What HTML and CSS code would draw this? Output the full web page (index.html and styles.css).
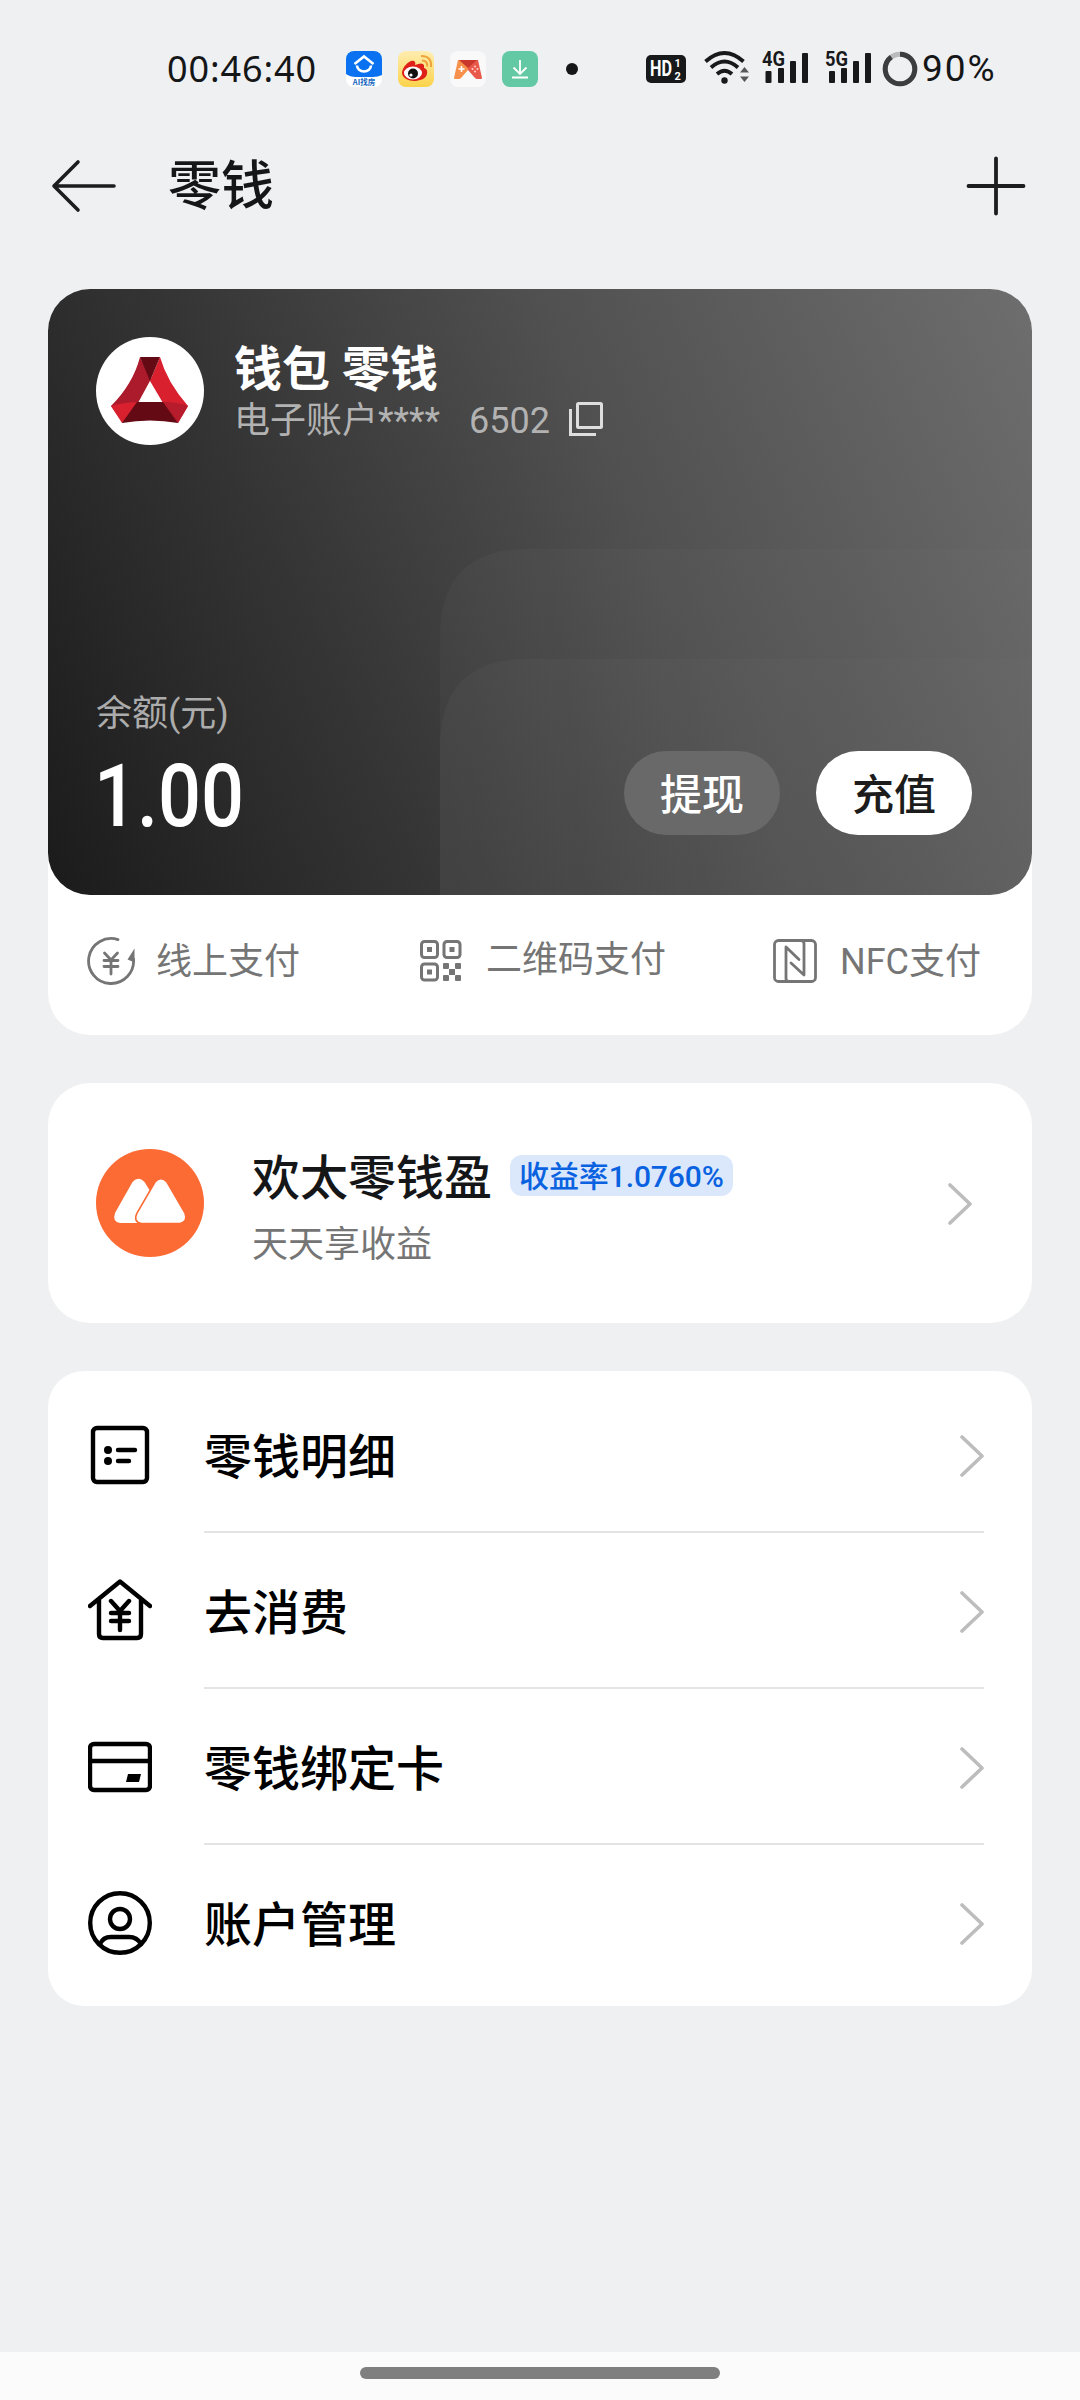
FILE: index.html
```html
<!DOCTYPE html>
<html lang="zh-CN">
<head>
<meta charset="utf-8">
<title>零钱</title>
<link rel="stylesheet" href="styles.css">
</head>
<body>
<div class="screen">
  <div class="status">
    <span class="clock">00:46:40</span>
    <div class="apps">
      <svg width="36" height="36" viewBox="0 0 36 36"><rect width="36" height="36" rx="8" fill="#fff"/><path d="M8 0h20a8 8 0 0 1 8 8v16q-4 2-9 2H10q-6 0-10-3V8a8 8 0 0 1 8-8z" fill="#0a72f0"/><path d="M8.500 13L18 5.500 27.500 13M11 14.500a7 6 0 0 0 14 0" fill="none" stroke="#fff" stroke-width="2.600"/><text x="18" y="34" text-anchor="middle" class="tiny">AI找房</text></svg>
      <svg width="36" height="36" viewBox="0 0 36 36"><defs><linearGradient id="y" x2="0" y2="1"><stop stop-color="#ffedb0"/><stop offset="1" stop-color="#fbd34a"/></linearGradient></defs><rect width="36" height="36" rx="8" fill="url(#y)"/><path d="M4 22C4 16 12 8 16 10q2 1 1 4 7-3 9 0l0 3q4 1 3 6c-1 5-8 7-13 7S4 27 4 22z" fill="#df2018"/><ellipse cx="15" cy="22" rx="9" ry="6.500" fill="#fff"/><circle cx="15" cy="22.500" r="5" fill="#111"/><circle cx="13" cy="24" r="1.600" fill="#fff"/><path d="M24 9.500q6 0 5 6M23 5q11 0 10 11" fill="none" stroke="#eda33a" stroke-width="2"/></svg>
      <svg width="36" height="36" viewBox="0 0 36 36"><rect width="36" height="36" rx="8" fill="#f9f9fa"/><path d="M8 9h10v10l-7 8q-1 1-2 1H5q-1 0-1-1z" fill="#f7904a"/><path d="M28 9H18v10l7 8q1 1 2 1h4q1 0 1-1z" fill="#e9594b"/><path d="M9 9h18l-9 8z" fill="#c9382b"/><path d="M8.500 18h6M11.500 15v6" stroke="#fff" stroke-width="1.600"/><g fill="#ffd0c5"><circle cx="25" cy="15.500" r="1"/><circle cx="22.500" cy="18" r="1"/><circle cx="27.500" cy="18" r="1"/><circle cx="25" cy="20.500" r="1"/></g></svg>
      <svg width="36" height="36" viewBox="0 0 36 36"><rect width="36" height="36" rx="8" fill="#63c9a4"/><path d="M18 9v14M11.500 16.500L18 23l6.500-6.500M10 26.500h16" fill="none" stroke="#fff" stroke-width="1.800"/></svg>
    </div>
    <span class="dot"></span>
    <svg class="signals" width="244" height="52" viewBox="0 -6 244 52">
      <g fill="#18191a">
        <rect y="6" width="40" height="28" rx="5"/>
        <text x="4" y="27" textLength="22" lengthAdjust="spacingAndGlyphs" class="hd">HD</text>
        <text x="28.500" y="18" class="hdn">1</text><text x="28.500" y="31" class="hdn">2</text>
        <circle cx="78.500" cy="31.500" r="3.200"/>
        <path d="M94 23.500l4.500-5.500 4.500 5.500zM94 27.500h9L98.500 33z" fill="#55575a"/>
      </g>
      <g fill="none" stroke="#18191a" stroke-width="3.800"><path d="M59.500 12.500q19-17 38 0M65 18.500q13.500-12 27 0M71 25q7.500-6.500 15 0"/></g>
      <g fill="#18191a">
        <rect x="119.500" y="22" width="6" height="12" rx="1"/><rect x="132" y="19" width="6" height="15" rx="1"/><rect x="144" y="12" width="6" height="22" rx="1"/><rect x="156" y="4" width="6" height="30" rx="1"/>
        <text x="116" y="17" textLength="23" lengthAdjust="spacingAndGlyphs" class="net">4G</text>
        <rect x="183" y="22" width="6" height="12" rx="1"/><rect x="195" y="19" width="6" height="15" rx="1"/><rect x="207" y="12" width="6" height="22" rx="1"/><rect x="219" y="4" width="6" height="30" rx="1"/>
        <text x="179" y="17" textLength="23" lengthAdjust="spacingAndGlyphs" class="net">5G</text>
      </g>
    </svg>
    <svg class="ring" width="36" height="36" viewBox="0 0 36 36"><circle cx="18" cy="18" r="14.800" fill="none" stroke="#b9bbbd" stroke-width="5"/><circle cx="18" cy="18" r="14.800" fill="none" stroke="#3c3d3f" stroke-width="5" pathLength="100" stroke-dasharray="90 10" transform="rotate(-90 18 18)"/></svg>
    <span class="battery">90%</span>
  </div>

  <header class="titlebar">
    <svg width="66" height="54" viewBox="0 0 66 54" fill="none" stroke="#1c1d1e" stroke-width="3.600" stroke-linecap="round" stroke-linejoin="round"><path d="M27 3L3 27l24 24M3 27h60"/></svg>
    <h1>零钱</h1>
    <svg width="60" height="60" viewBox="0 0 60 60" stroke="#1c1d1e" stroke-width="3.800" stroke-linecap="round"><path d="M2.500 30h55M30 2.500v55"/></svg>
  </header>

  <section class="wallet">
    <div class="bankcard">
      <svg class="cardart" viewBox="0 0 984 606" width="984" height="606"><defs><linearGradient id="s1" x2="1" y2="0"><stop stop-color="#fff" stop-opacity=".028"/><stop offset=".8" stop-color="#fff" stop-opacity=".012"/></linearGradient><linearGradient id="s2" x2="1" y2="0"><stop stop-color="#fff" stop-opacity=".03"/><stop offset=".8" stop-color="#fff" stop-opacity=".01"/></linearGradient></defs><path d="M392 606V348q0-88 88-88h504v346z" fill="url(#s1)"/><path d="M392 606V458q0-88 88-88h504v236z" fill="url(#s2)"/></svg>
      <div class="cardhead">
        <svg width="108" height="108" viewBox="0 0 108 108"><circle cx="54" cy="54" r="54" fill="#fff"/><path d="M44 20Q37 47 15 69l12 17q8-6 15-20l13-24-11-22z" fill="#ab1b2b"/><path d="M64 20Q71 45 92 69l-10 17q-10-6-15-20L54 44z" fill="#d9202f"/><path d="M44 20h20L54 44z" fill="#640a14"/><path d="M15 69q14-4 29-4L26 86z" fill="#d9202f"/><path d="M92 69q-10-4-25-4l15 21z" fill="#b61c2c"/><path d="M41 65h26l15 21q-28-5-56 0z" fill="#640a14"/></svg>
        <div class="names">
          <div class="bank">钱包 零钱</div>
          <div class="acct"><span>电子账户****</span><span class="tail">6502</span><svg width="34" height="34" viewBox="0 0 34 34" fill="none" stroke="#dedede" stroke-width="3"><rect x="8.500" y="1.500" width="24" height="24" rx="1"/><path d="M1.500 7v25.500H27"/></svg></div>
        </div>
      </div>
      <div class="cardfoot">
        <div class="balance"><div class="label">余额(元)</div><div class="amount">1.00</div></div>
        <button class="pill ghost">提现</button>
        <button class="pill solid">充值</button>
      </div>
    </div>
    <div class="methods">
      <div class="method">
        <svg width="48" height="48" viewBox="0 0 48 48" fill="none" stroke="#757575" stroke-width="2.800" stroke-linecap="round"><path d="M31 2.600A22.500 22.500 0 1 0 46.500 22"/><path d="M46.500 24v-9l-4.500 7z" fill="#757575" stroke-width="2"/><path d="M17.500 16l6.500 7 6.500-7M24 23v14M17 23.500h14M17 29.500h14"/></svg>
        <span>线上支付</span>
      </div>
      <div class="method qr">
        <svg width="42" height="42" viewBox="0 0 42 42"><g fill="none" stroke="#757575" stroke-width="3"><rect x="1.500" y="1.500" width="16" height="16" rx="3"/><rect x="24" y="1.500" width="16" height="16" rx="3"/><rect x="1.500" y="24" width="16" height="16" rx="3"/></g><g fill="#757575"><rect x="7" y="7" width="5" height="5"/><rect x="29.500" y="7" width="5" height="5"/><rect x="7" y="29.500" width="5" height="5"/><rect x="23" y="23" width="6" height="6" rx="1"/><rect x="35" y="23" width="6" height="6" rx="1"/><rect x="29" y="29" width="6" height="6"/><rect x="23" y="35" width="6" height="6" rx="1"/><rect x="35" y="35" width="6" height="6" rx="1"/></g></svg>
        <span>二维码支付</span>
      </div>
      <div class="method nfc">
        <svg width="44" height="44" viewBox="0 0 44 44" fill="none" stroke="#757575" stroke-width="2.800" stroke-linecap="round" stroke-linejoin="round"><rect x="1.500" y="1.500" width="41" height="41" rx="4"/><path d="M16 42.500q-3 0-3-3V8l13 12.500M28 1.500q3 0 3 3V36L18 24"/></svg>
        <span>NFC支付</span>
      </div>
    </div>
  </section>

  <section class="fund">
    <svg width="108" height="108" viewBox="0 0 108 108"><circle cx="54" cy="54" r="54" fill="#fc6b34"/><path d="M36.500 33q6-6.500 12 0l8 13-13 28H24q-8-1-5-10z" fill="#fff"/><path d="M59 33q6-6.500 12 0l18 31q3 9-5 10.500H45q-8-2-4-10.500z" fill="#fff" stroke="#fc6b34" stroke-width="1.600"/></svg>
    <div class="fundtext">
      <div class="fundtitle"><h2>欢太零钱盈</h2><span class="badge">收益率1.0760%</span></div>
      <p>天天享收益</p>
    </div>
    <svg class="chev" width="26" height="42" viewBox="0 0 26 42"><path d="M2 2l20 19L2 40"/></svg>
  </section>

  <nav class="menu">
    <a class="item">
      <svg width="64" height="64" viewBox="0 0 64 64" class="ic"><rect x="5" y="5" width="54" height="54" rx="4"/><path d="M30 27h17M30 38h11"/><g fill="#000" stroke="none"><circle cx="20" cy="27" r="4"/><circle cx="20" cy="38" r="4"/></g></svg>
      <span>零钱明细</span><svg class="chev" width="26" height="42" viewBox="0 0 26 42"><path d="M2 2l20 19L2 40"/></svg>
    </a>
    <a class="item">
      <svg width="64" height="64" viewBox="0 0 64 64" class="ic"><path d="M2 27L32 2.500l30 24.500M11 21v34q0 4 4 4h34q4 0 4-4V21M23 22l9 10 9-10M32 32v19M23 34h18M23 42h18"/></svg>
      <span>去消费</span><svg class="chev" width="26" height="42" viewBox="0 0 26 42"><path d="M2 2l20 19L2 40"/></svg>
    </a>
    <a class="item">
      <svg width="64" height="64" viewBox="0 0 64 64" class="ic"><rect x="2" y="9" width="60" height="46" rx="4"/><path d="M2 26h60"/><path d="M40 39h13l-2 8H38z" fill="#000" stroke="none"/></svg>
      <span>零钱绑定卡</span><svg class="chev" width="26" height="42" viewBox="0 0 26 42"><path d="M2 2l20 19L2 40"/></svg>
    </a>
    <a class="item">
      <svg width="64" height="64" viewBox="0 0 64 64" class="ic"><circle cx="32" cy="32" r="29.800"/><circle cx="32" cy="28" r="10"/><path d="M12 53q3-7 11-7h18q8 0 12 7"/></svg>
      <span>账户管理</span><svg class="chev" width="26" height="42" viewBox="0 0 26 42"><path d="M2 2l20 19L2 40"/></svg>
    </a>
  </nav>

  <div class="gesture"><span></span></div>
</div>
</body>
</html>
```

FILE: styles.css
```css
* { box-sizing: border-box; }
body {
  margin: 0;
  background: #eff0f2;
  color: #151617;
  font-family: Roboto, "Noto Sans CJK SC", sans-serif;
}
svg { display: block; flex: none; }
h1, h2, p { margin: 0; }
.screen { width: 1080px; height: 2400px; display: flex; flex-direction: column; }

.status { height: 137px; padding: 0 0 0 167px; display: flex; align-items: center; flex: none; }
.clock { width: 178px; font: 400 36px/44px "Noto Sans", sans-serif; letter-spacing: 0.900px; white-space: nowrap; padding-top: 1px; }
.apps { display: flex; gap: 16px; margin-left: 1px; }
.tiny { font: 700 7.500px "Noto Sans CJK SC", sans-serif; fill: #1466c0; }
.dot { width: 12px; height: 12px; border-radius: 50%; background: #151617; margin-left: 28px; }
.signals { margin-left: 68px; }
.hd { font: 700 22px Roboto, sans-serif; fill: #fff; }
.hdn { font: 700 11px Roboto, sans-serif; fill: #fff; }
.net { font: 700 20px Roboto, sans-serif; stroke: #eff0f2; stroke-width: 2px; paint-order: stroke; }
.ring { margin-left: -8px; }
.battery { margin-left: 4px; font-size: 37px; line-height: 44px; letter-spacing: 2px; padding-top: 1px; }

.titlebar { height: 98px; padding: 0 54px 0 51px; display: flex; align-items: center; flex: none; }
.titlebar h1 { flex: 1; margin-left: 51px; font-size: 53px; line-height: 76px; font-weight: 500; padding-top: 1px; }

.wallet { margin: 54px 48px 0; height: 746px; background: #fff; border-radius: 42px; flex: none; }
.bankcard {
  position: relative;
  height: 606px;
  padding: 48px 60px 60px 48px;
  border-radius: 42px;
  overflow: hidden;
  display: flex;
  flex-direction: column;
  justify-content: space-between;
  background: linear-gradient(66deg, #1b1b1b 0%, #343434 30%, #505050 60%, #6e6e6e 100%);
}
.cardart { position: absolute; left: 0; top: 0; }
.cardhead, .cardfoot { position: relative; display: flex; }
.names { margin-left: 30px; color: #fff; }
.bank { font-size: 48px; line-height: 56px; font-weight: 700; padding-top: 5px; }
.acct { display: flex; align-items: center; font-size: 36px; line-height: 44px; color: #b2b2b2; }
.acct span { padding-top: 1px; }
.acct svg { margin-top: -3px; }
.acct .tail { margin: 0 19px 0 29px; }
.cardfoot { align-items: flex-end; }
.balance { flex: 1; }
.label { font-size: 36px; line-height: 44px; color: #acacac; }
.amount { font-size: 87px; line-height: 90px; font-weight: 500; color: #fff; transform: scaleX(0.87); transform-origin: left; margin-left: -2px; margin-top: 15px; margin-bottom: -6px; }
.pill { width: 156px; height: 84px; border: 0; border-radius: 42px; padding: 5px 0 0; font: 500 42px/79px Roboto, "Noto Sans CJK SC", sans-serif; }
.ghost { background: #696969; color: #fff; }
.solid { background: #fff; color: #1c1c1c; margin-left: 36px; }

.methods { height: 131px; padding: 0 50px 0 39px; display: flex; align-items: center; font-size: 36px; line-height: 50px; color: #757575; }
.method { display: flex; align-items: center; }
.method span { margin-left: 21px; white-space: nowrap; padding-top: 3px; }
.qr { margin-left: 120px; }
.qr span { margin-left: 24px; padding: 0 0 1px; }
.nfc { margin-left: 107px; }
.nfc span { margin-left: 23px; }

.fund { margin: 48px 48px 0; height: 240px; padding: 0 58px 0 48px; background: #fff; border-radius: 42px; display: flex; align-items: center; flex: none; }
.fundtext { flex: 1; margin-left: 48px; padding-top: 12px; }
.fundtitle { display: flex; align-items: center; }
.fundtitle h2 { font-size: 48px; line-height: 60px; font-weight: 500; }
.badge { margin: -6px 0 0 18px; height: 41px; padding: 1px 9px 0; border-radius: 12px; background: #dbe8fc; color: #0a62e0; font-size: 30px; line-height: 41px; font-weight: 500; letter-spacing: -0.100px; }
.fundtext p { margin-top: 11px; font-size: 36px; line-height: 50px; color: #757575; }
.chev { margin-top: 2px; fill: none; stroke: #bdbdbd; stroke-width: 3.600px; stroke-linecap: round; stroke-linejoin: round; }

.menu { margin: 48px 48px 0; height: 635px; padding-top: 6px; background: #fff; border-radius: 36px; color: #000; flex: none; }
.item { height: 156px; margin: 0 46px 0 40px; display: flex; align-items: center; background: linear-gradient(#e4e4e4, #e4e4e4) 116px bottom / 780px 2px no-repeat; }
.item:last-child { background: none; }
.item span { flex: 1; margin-left: 52px; padding-top: 5px; font-size: 48px; line-height: 60px; font-weight: 500; }
.ic { fill: none; stroke: #000; stroke-width: 4.400px; stroke-linecap: round; stroke-linejoin: round; }

.gesture { height: 48px; margin-top: auto; background: #fbfbfb; display: flex; justify-content: center; padding-top: 15px; flex: none; }
.gesture span { width: 360px; height: 12px; border-radius: 6px; background: #7f7f7f; }
```
